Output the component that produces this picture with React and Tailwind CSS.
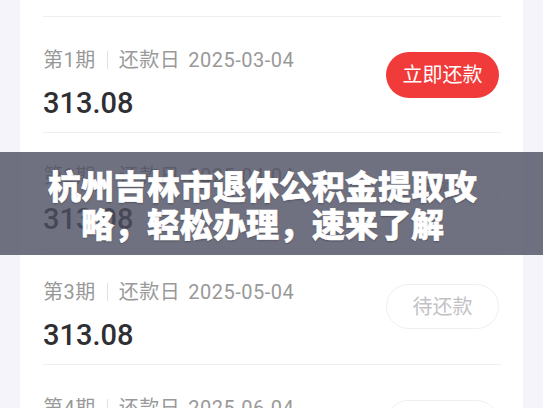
import React from "react";

const rows = [
  { n: 0, date: "2025-02-04", status: "paid" },
  { n: 1, date: "2025-03-04", status: "now" },
  { n: 2, date: "2025-04-04", status: "wait" },
  { n: 3, date: "2025-05-04", status: "wait" },
  { n: 4, date: "2025-06-04", status: "wait" },
];

const Row = ({ n, date, status }) => (
  <div className="h-[116px] border-b border-[#efeff2] flex justify-between shrink-0">
    <div className="pt-[31px] flex flex-col">
      <div className="flex items-center text-[20px] leading-[24px] text-[#999999]">
        <span className="tracking-[0.5px]">第{n}期</span>
        <span className="mx-[11px] w-px h-[18px] bg-[#e2e2e6]"></span>
        <span className="tracking-[0.5px]">还款日</span>
        <span className="ml-[8px] tracking-[0.5px]">{date}</span>
      </div>
      <div className="mt-[14px] text-[29px] leading-[34px] font-medium text-[#2f2f33]">
        313.08
      </div>
    </div>
    {status === "now" && (
      <button className="self-center mr-[2px] w-[113px] h-[46px] rounded-full bg-[#f03b3a] text-white text-[20px]">
        立即还款
      </button>
    )}
    {status === "wait" && (
      <button className="self-center mr-[2px] w-[113px] h-[45px] rounded-full border border-[#efeff2] bg-white text-[#c2c2c5] text-[20px]">
        待还款
      </button>
    )}
  </div>
);

export default function App() {
  return (
    <div
      className="relative w-[543px] h-[408px] overflow-hidden bg-[#f4f4fa]"
      style={{ fontFamily: 'Roboto, "Noto Sans CJK SC", sans-serif' }}
    >
      <div className="mx-[20px] bg-white pl-[23px] pr-[22px] flex flex-col mt-[-99px]">
        {rows.map((r) => (
          <Row key={r.n} {...r} />
        ))}
      </div>

      {/* title banner over the list */}
      <div className="absolute left-0 right-0 top-[152px] h-[103px] bg-[rgba(76,78,96,0.8)] flex items-center justify-center pr-[18px]">
        <h1
          className="w-[440px] text-center text-white text-[33px] leading-[38px] font-black"
          style={{
            fontFamily: '"Noto Sans CJK SC", sans-serif',
            textShadow: "0 1px 2px rgba(0,0,0,0.35)",
            WebkitTextStroke: "0.6px white",
          }}
        >
          杭州吉林市退休公积金提取攻略，轻松办理，速来了解
        </h1>
      </div>
    </div>
  );
}
